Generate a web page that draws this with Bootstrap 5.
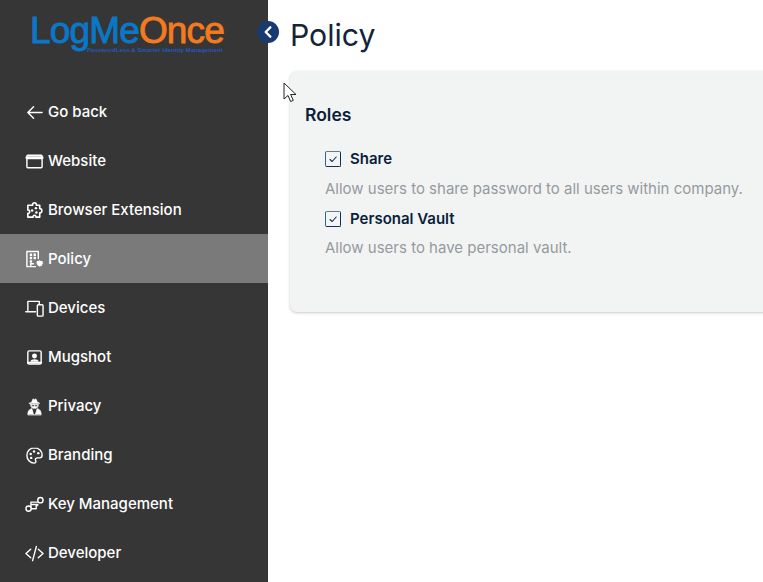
<!DOCTYPE html>
<html lang="en"><head><meta charset="utf-8"><title>Policy</title>
<link rel="stylesheet" href="https://cdn.jsdelivr.net/npm/bootstrap@5.3.0/dist/css/bootstrap.min.css">
<style>
html,body{height:582px;overflow:hidden;background:#fff}
body{font-family:Inter,"Liberation Sans",sans-serif;color:#0b1f3a}
.shell{height:582px;overflow:hidden}
.side{width:268px;flex:none;background:#363636;height:582px;overflow:hidden}
.brandrow{height:87px;padding:15px 0 0 30px}
.brandname{display:block;font-family:"Liberation Sans",sans-serif;font-size:37px;line-height:31px;letter-spacing:-.85px;-webkit-text-stroke:.9px currentColor;height:31px}
.bl{color:#0a78c8}.bo{color:#f37a1f}
.brandtag{display:block;margin:0 0 0 57px;font-family:"Liberation Sans",sans-serif;font-size:6.1px;line-height:7px;font-weight:700;color:#2557b8;white-space:nowrap}
.sideitem{height:49px;padding:2px 0 0 25px;gap:4px;color:#fff;font-size:15px;font-weight:500;text-decoration:none}
.sideitem:hover{color:#fff}
.sideitem.active{background:#7a7a7a}
.sideitem svg{width:19px;height:19px;flex:none;fill:none;stroke:#fff;stroke-width:1.5;stroke-linecap:round;stroke-linejoin:round}
.mainpane{min-width:0;padding:0 0 0 22px}
.toggler{position:absolute;left:257px;top:21px;width:22px;height:22px;border-radius:50%;background:#173a73;border:0;padding:0;z-index:3}
.toggler svg{display:block;margin:auto;width:14px;height:14px;fill:none;stroke:#fff;stroke-width:2;stroke-linecap:round;stroke-linejoin:round}
.pagetitle{font-size:30.2px;font-weight:400;line-height:36px;margin:17px 0 18px;color:#14233a}
.rolecard{background:#f2f4f4;width:520px;height:241px;border:0;border-radius:7px 0 0 7px;box-shadow:0 1px 3px rgba(0,0,0,.22);padding:33px 0 0 15px}
.rolehead{font-size:17.5px;font-weight:600;line-height:22px;margin:0 0 23px;color:#0b1f3a}
.roleitem{padding-left:20px}
.rolecheck{gap:9px;height:20px;margin:0;font-size:15px;font-weight:600;color:#0b1f3a}
.fakebox{width:16px;height:16px;flex:none;margin-top:-1px;border:1px solid #0f2f5c;border-top-color:#5f7c8c;border-left-color:#2f6488;border-radius:2px;background:#f3f5f5;display:block}
.fakebox svg{display:block;width:14px;height:14px;fill:none;stroke:#0f2f5c;stroke-width:1.1;stroke-linecap:round;stroke-linejoin:round}
.rolenote{font-size:15px;line-height:20px;color:#969a9e;margin:10px 0 10px;white-space:nowrap}
.rolenote:last-child{margin-top:9px}
.cursor{position:absolute;left:283px;top:82px;width:14px;height:21px;z-index:5}
</style></head>
<body>
<div class="shell d-flex position-relative">
<nav class="side d-flex flex-column">
<div class="brandrow"><span class="brandname"><span class="bl">LogMe</span><span class="bo">Once</span></span><span class="brandtag">PasswordLess &amp; Smarter Identity Management</span></div>
<a class="sideitem d-flex align-items-center" href="#"><svg viewBox="0 0 20 20"><path d="M18 10H3M9 4l-6 6 6 6"/></svg>Go back</a>
<a class="sideitem d-flex align-items-center" href="#"><svg viewBox="0 0 20 20"><rect x="2" y="3.500" width="16" height="13" rx="1"/><path d="M2 6h16" stroke-width="3"/></svg>Website</a>
<a class="sideitem d-flex align-items-center" href="#"><svg viewBox="0 0 20 20"><path d="M8 4.500c-.5-3.500 4.500-3.500 4 0H15.500V8c3-.5 3 5 0 4.500V17H11.500c.5-2.500-3.500-2.500-3 0H3V13c2.500.5 2.500-4 0-3.500V4.500z" stroke-width="1.700"/><circle cx="7.500" cy="10" r="1.300" fill="#fff" stroke="none"/><circle cx="11.500" cy="7.500" r="1.300" fill="#fff" stroke="none"/><circle cx="12" cy="12" r="1.300" fill="#fff" stroke="none"/></svg>Browser Extension</a>
<a class="sideitem active d-flex align-items-center" href="#"><svg viewBox="0 0 20 20"><path d="M11 17.500H2V1.500h12V9" stroke-width="1.500"/><path d="M5 5h2.500M9 5h2.500M5 8.500h2.500M9 8.500h2.500M5 12h2.500" stroke-width="2.600" stroke-linecap="butt"/><path d="M6 17v-2.500h3" stroke-width="1.500"/><path d="M15.500 10.500l4 1.500c0 3.300-1.500 5-4 6-2.500-1-4-2.700-4-6z" fill="#fff" stroke="#7a7a7a" stroke-width="1"/></svg>Policy</a>
<a class="sideitem d-flex align-items-center" href="#"><svg viewBox="0 0 20 20"><path d="M3 12V2.500h12v2.500M.8 13.500H11"/><rect x="13" y="6" width="6" height="12" rx="1"/></svg>Devices</a>
<a class="sideitem d-flex align-items-center" href="#"><svg viewBox="0 0 20 20"><rect x="3" y="3" width="14" height="14" rx="1.500"/><circle cx="10" cy="8.500" r="2.600" fill="#fff" stroke="none"/><path d="M5.500 14.500c.5-3.500 8.500-3.500 9 0z" fill="#fff" stroke="none"/><path d="M3 15.500h14" stroke-width="2"/></svg>Mugshot</a>
<a class="sideitem d-flex align-items-center" href="#"><svg viewBox="0 0 20 20"><path d="M7 5.500l1.500-3.500 1.500.8 1.500-.8L13 5.500l2.500 1.200h-11z" fill="#fff" stroke-width=".8"/><path d="M6 8h8c0 2.800-1.500 4-4 4s-4-1.200-4-4z" fill="#fff" stroke-width=".8"/><path d="M3 18.500c0-3.500 1-5.500 4.200-6.200l1.800 6.200h2l1.800-6.200c3.200.7 4.200 2.700 4.200 6.200z" fill="#fff" stroke-width=".8"/><path d="M7.500 9.300h1.700M10.800 9.300h1.700M9.900 13v5" stroke="#363636" stroke-width="1.100"/></svg>Privacy</a>
<a class="sideitem d-flex align-items-center" href="#"><svg viewBox="0 0 20 20"><path d="M10 2c-4.800 0-8 3.500-8 8 0 4.300 3.300 8 7.500 8 2 0 2.300-1.500 1.700-2.700-.8-1.500 0-2.800 2-2.800h2.300c1.700 0 2.500-1.200 2.500-3C18 5.200 14.800 2 10 2z"/><circle cx="6" cy="8.500" r="1.300" fill="#fff" stroke="none"/><circle cx="9.500" cy="5.700" r="1.300" fill="#fff" stroke="none"/><circle cx="14" cy="7.500" r="1.300" fill="#fff" stroke="none"/><circle cx="6.500" cy="12.500" r="1.300" fill="#fff" stroke="none"/></svg>Branding</a>
<a class="sideitem d-flex align-items-center" href="#"><svg viewBox="0 0 20 20"><circle cx="3.800" cy="14.300" r="2.800"/><circle cx="16.200" cy="5.500" r="2.800"/><path d="M6.200 12.800V7.500H13M6.600 14.500h5.200V11h1.500M6.200 10h7.300" stroke-width="1.500"/></svg>Key Management</a>
<a class="sideitem d-flex align-items-center" href="#"><svg viewBox="0 0 20 20"><path d="M6 5.500L1 10l5 4.500M14 5.500l5 4.500-5 4.500M12 2.500L8 17.500"/></svg>Developer</a>
</nav>
<button class="toggler" type="button" aria-label="Collapse"><svg viewBox="0 0 12 12"><path d="M8 2L4 6l4 4"/></svg></button>
<main class="mainpane flex-grow-1">
<h1 class="pagetitle">Policy</h1>
<section class="rolecard card">
<h2 class="rolehead">Roles</h2>
<div class="roleitem">
<label class="rolecheck d-flex align-items-center"><span class="fakebox"><svg viewBox="0 0 14 14"><path d="M4 7.500L6.200 9.500l4-4.500"/></svg></span>Share</label>
<p class="rolenote">Allow users to share password to all users within company.</p>
<label class="rolecheck d-flex align-items-center"><span class="fakebox"><svg viewBox="0 0 14 14"><path d="M4 7.500L6.200 9.500l4-4.500"/></svg></span>Personal Vault</label>
<p class="rolenote">Allow users to have personal vault.</p>
</div>
</section>
</main>
<svg class="cursor" viewBox="0 0 14 21"><path d="M1 1v16l4-3.500 2.700 6 2.600-1.200-2.700-5.800H13z" fill="#fff" stroke="#222" stroke-width="1"/></svg>
</div>
<script src="https://cdn.jsdelivr.net/npm/bootstrap@5.3.0/dist/js/bootstrap.bundle.min.js"></script>
</body></html>
